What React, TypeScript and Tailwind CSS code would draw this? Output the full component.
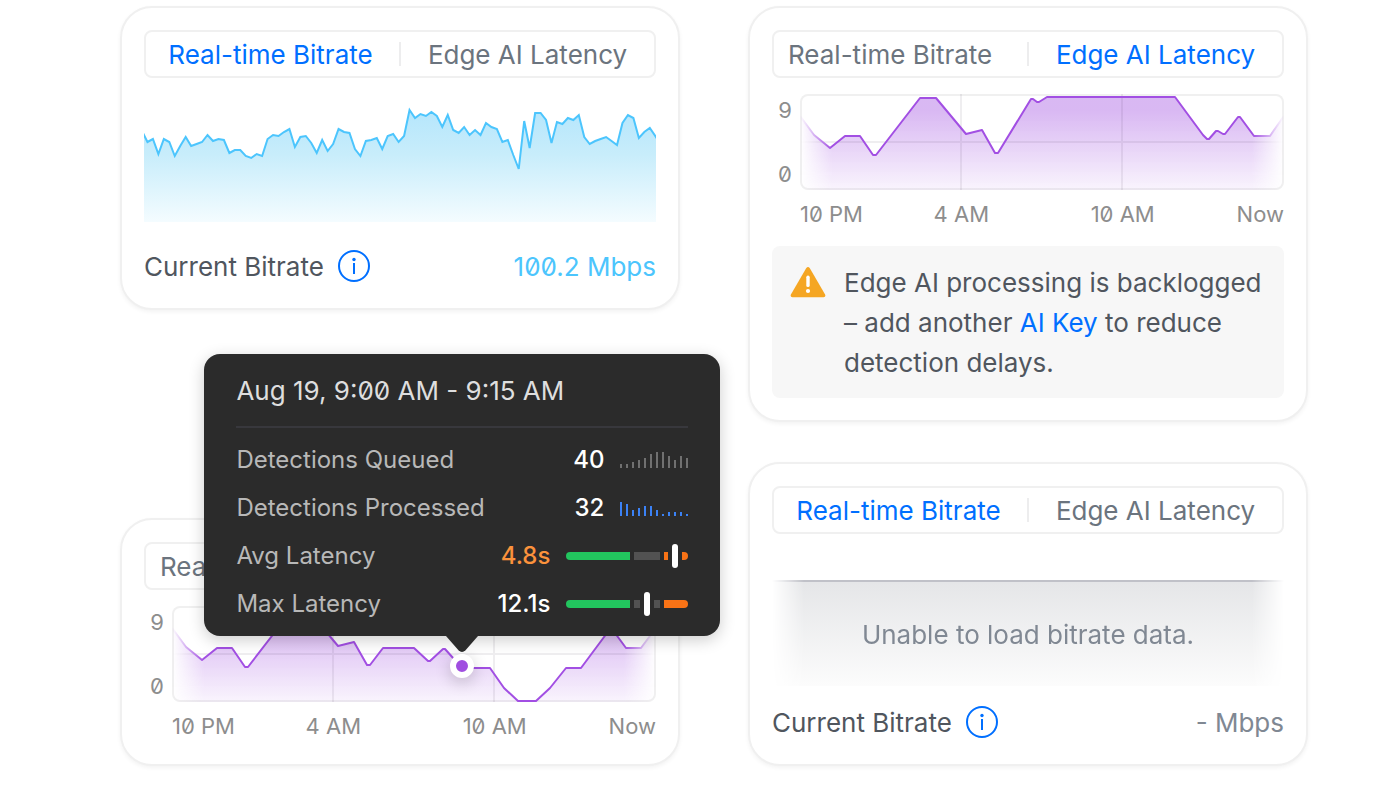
import clsx from 'clsx'
import { ReactNode } from 'react'

type Tab = 'bitrate' | 'latency'
type Point = [number, number]

// one sample every 5.46 units, y measured down from the top of the plot
const BITRATE_STEP = 5.46
const BITRATE_SAMPLES = [
  35, 46, 43, 58, 43, 46, 60, 50, 41, 50, 48, 46, 39, 45, 43, 44, 57, 54, 54, 60, 62, 58, 60, 43,
  39, 40, 36, 33, 51, 41, 40, 47, 57, 44, 55, 48, 33, 36, 37, 53, 60, 45, 44, 42, 53, 40, 38, 46,
  40, 14, 22, 18, 20, 16, 20, 31, 19, 34, 37, 31, 39, 34, 39, 27, 31, 33, 46, 44, 59, 73, 25, 52,
  17, 17, 24, 47, 26, 28, 22, 24, 19, 41, 48, 45, 43, 41, 45, 49, 27, 19, 22, 42, 36, 32, 40, 48,
]

const NIGHT_POINTS: Point[] = [
  [0, 22], [14, 41], [30, 54], [45, 42], [60, 42], [73, 61], [76, 61], [120, 4], [136, 4],
  [166, 40], [182, 36], [195, 59], [198, 59],
]

const BACKLOG_POINTS: Point[] = [
  ...NIGHT_POINTS,
  [231, 5], [233, 5], [237, 8], [239, 8], [247, 3], [375, 3], [403, 41], [407, 45], [409, 45],
  [416, 37], [418, 37], [423, 40], [425, 40], [438, 23], [440, 23], [454, 42], [470, 42], [484, 22],
]

const HISTORY_POINTS: Point[] = [
  ...NIGHT_POINTS,
  [211, 42], [242, 42], [256, 55], [258, 55], [271, 43], [273, 43], [290, 62], [318, 62],
  [332, 82], [346, 95], [364, 95], [378, 82], [394, 62], [409, 62], [438, 23], [440, 23],
  [454, 42], [469, 42], [484, 22],
]

const QUEUED = [4, 4, 6, 8, 10, 14, 16, 16, 12, 8, 12, 10]
const PROCESSED = [14, 12, 6, 8, 10, 10, 6, 2, 4, 4, 4, 2]

const toLine = (points: Point[]) => 'M' + points.map((p) => p.join(' ')).join('L')

function Card({ children }: { children: ReactNode }) {
  return (
    <section className="rounded-[32px] border-2 border-[#f0f0f0] bg-white p-[22px] shadow-[0_2px_4px_rgba(0,0,0,0.05)]">
      {children}
    </section>
  )
}

function Tabs({ active }: { active: Tab }) {
  return (
    <div
      role="tablist"
      className="grid h-12 grid-cols-[1fr_2px_1fr] items-center rounded-lg border-2 border-[#f0f0f0] text-[26px] leading-8 text-[#6b747e]">
      <button
        role="tab"
        aria-selected={active === 'bitrate'}
        className={clsx(
          'pt-0.5 whitespace-nowrap',
          active === 'bitrate' ? 'pr-1 text-[#006fff]' : 'pl-3.5 text-left'
        )}>
        Real-time Bitrate
      </button>
      <span className="h-6 bg-[#ededee]" />
      <button
        role="tab"
        aria-selected={active === 'latency'}
        className={clsx('pt-0.5 whitespace-nowrap', active === 'latency' && 'text-[#006fff]')}>
        Edge AI Latency
      </button>
    </div>
  )
}

function InfoIcon() {
  return (
    <svg viewBox="0 0 32 32" className="size-8 text-[#006fff]" fill="none">
      <circle cx="16" cy="16" r="15" stroke="currentColor" strokeWidth="2" />
      <circle cx="16" cy="9.5" r="1.7" fill="currentColor" />
      <path d="M16 13V24" stroke="currentColor" strokeWidth="2" />
    </svg>
  )
}

function WarningIcon() {
  return (
    <svg viewBox="0 0 36 32" className="mt-1 h-8 w-9 shrink-0">
      <path
        d="M16.3 2.1Q18 -.2 19.7 2.1L35.1 28.4Q36 31 33.6 31.2H2.4Q0 31 .9 28.4Z"
        fill="#f5a623"
      />
      <path d="M18 11.2V19.4" stroke="#fff" strokeWidth="3.4" strokeLinecap="round" />
      <circle cx="18" cy="25" r="2.1" fill="#fff" />
    </svg>
  )
}

function CurrentBitrate({ value, className }: { value: string; className: string }) {
  return (
    <div className="flex h-10 items-center text-[26px] leading-8 text-[#50565e]">
      <span className="pt-0.5">Current Bitrate</span>
      <button aria-label="About current bitrate" className="ml-3.5">
        <InfoIcon />
      </button>
      <span className={clsx('ml-auto pt-0.5 slashed-zero', className)}>{value}</span>
    </div>
  )
}

function BitrateChart() {
  const line = toLine(BITRATE_SAMPLES.map((y, i) => [i * BITRATE_STEP, y]))
  return (
    <svg
      viewBox="2 -2 512 128"
      preserveAspectRatio="none"
      className="mt-4 mb-6 block h-32 w-full overflow-hidden">
      <defs>
        <linearGradient id="bitrate-fill" x1="0" y1="0" x2="0" y2="1">
          <stop offset="0" stopColor="#b5e6fc" />
          <stop offset="0.4" stopColor="#c8edfb" />
          <stop offset="1" stopColor="#f4fcff" />
        </linearGradient>
      </defs>
      <path d={`${line}V126H0Z`} fill="url(#bitrate-fill)" />
      <path
        d={line}
        fill="none"
        stroke="#4cc5fd"
        strokeWidth="2"
        vectorEffect="non-scaling-stroke"
      />
    </svg>
  )
}

type LatencyChartProps = {
  id: string
  points: Point[]
  children?: ReactNode
}

function LatencyChart({ id, points, children }: LatencyChartProps) {
  const line = toLine(points)
  return (
    <div className="mt-4 text-[22px] leading-8 text-[#8d8d8d]">
      <div className="flex h-24">
        <div className="flex w-7 flex-col justify-between pr-2 text-right slashed-zero">
          <span>9</span>
          <span>0</span>
        </div>
        <div className="relative flex-1">
          <div className="h-full overflow-hidden rounded-lg shadow-[inset_0_0_0_2px_#f0f0f0]">
            <svg
              viewBox="0 0 484 96"
              preserveAspectRatio="none"
              className="block size-full [mask-image:linear-gradient(90deg,transparent,#000_32px,#000_calc(100%-32px),transparent)]">
              <defs>
                <linearGradient id={id} x1="0" y1="0" x2="0" y2="1">
                  <stop offset="0.15" stopColor="#a04ee0" stopOpacity="0.4" />
                  <stop offset="1" stopColor="#a04ee0" stopOpacity="0.06" />
                </linearGradient>
              </defs>
              <path d={`${line}V96H0Z`} fill={`url(#${id})`} />
              <path d="M160 0h2v96h-2zM321 0h2v96h-2zM0 47h484v2H0z" fill="#1a1030" fillOpacity="0.07" />
              <path
                d={line}
                fill="none"
                stroke="#a24fe3"
                strokeWidth="2"
                strokeLinejoin="round"
                vectorEffect="non-scaling-stroke"
              />
            </svg>
          </div>
          {children}
        </div>
      </div>
      <div className="mt-2 ml-7 grid grid-cols-6 whitespace-nowrap slashed-zero">
        <span>10 PM</span>
        <span className="col-span-2 text-center">4 AM</span>
        <span className="col-span-2 text-center">10 AM</span>
        <span className="text-right">Now</span>
      </div>
    </div>
  )
}

function Bars({ values, className }: { values: number[]; className: string }) {
  return (
    <span className="ml-4 flex h-4 items-end gap-1">
      {values.map((v, i) => (
        <span key={i} className={clsx('w-0.5', className)} style={{ height: v }} />
      ))}
    </span>
  )
}

function MeterNeedle() {
  return <span className="h-6 w-1.5 rounded-full bg-white" />
}

function TooltipRow({ label, children }: { label: string; children: ReactNode }) {
  return (
    <div className="flex h-12 items-center">
      <dt className="flex-1 text-[#b8b8b8]">{label}</dt>
      <dd className="flex items-center font-medium text-white">{children}</dd>
    </div>
  )
}

function LatencyTooltip() {
  return (
    <div
      role="tooltip"
      className="absolute bottom-[66px] left-[60%] z-10 w-[516px] -translate-x-1/2 rounded-2xl bg-[#2b2b2b] px-8 pb-2 shadow-[0_4px_16px_rgba(0,0,0,0.2)]">
      <div className="border-b-2 border-[#38383d] pt-[21px] pb-[19px] text-[26px] leading-8 text-[#dedede] slashed-zero">
        Aug 19, 9:00 AM - 9:15 AM
      </div>
      <dl className="mt-2 text-2xl">
        <TooltipRow label="Detections Queued">
          40
          <Bars values={QUEUED} className="bg-[#707070]" />
        </TooltipRow>
        <TooltipRow label="Detections Processed">
          32
          <Bars values={PROCESSED} className="bg-[#3b82f6]" />
        </TooltipRow>
        <TooltipRow label="Avg Latency">
          <span className="text-[#fb923c]">4.8s</span>
          <span className="ml-4 flex items-center gap-1">
            <span className="h-2 w-16 rounded-l-full bg-[#22c55e]" />
            <span className="h-2 w-[26px] bg-[#525252]" />
            <span className="h-2 w-1 bg-[#f97316]" />
            <MeterNeedle />
            <span className="h-2 w-1.5 rounded-r-full bg-[#f97316]" />
          </span>
        </TooltipRow>
        <TooltipRow label="Max Latency">
          12.1s
          <span className="ml-4 flex items-center gap-1">
            <span className="h-2 w-16 rounded-l-full bg-[#22c55e]" />
            <span className="h-2 w-1.5 bg-[#525252]" />
            <MeterNeedle />
            <span className="h-2 w-1.5 bg-[#525252]" />
            <span className="h-2 w-6 rounded-r-full bg-[#f97316]" />
          </span>
        </TooltipRow>
      </dl>
      <svg
        viewBox="0 0 32 17"
        className="absolute top-full left-1/2 -mt-px h-[17px] w-8 -translate-x-1/2">
        <path d="M0 0V1L12.5 15.2Q16 18.6 19.5 15.2L32 1V0Z" fill="#2b2b2b" />
      </svg>
    </div>
  )
}

export default function App() {
  return (
    <main className="grid grid-cols-2 gap-[68px] bg-white pt-1.5 pr-[92px] pb-[22px] pl-[120px] font-['Inter',sans-serif]">
      <div className="flex flex-col justify-between">
        <Card>
          <Tabs active="bitrate" />
          <BitrateChart />
          <CurrentBitrate value="100.2 Mbps" className="text-[#4cc5fd]" />
        </Card>
        <Card>
          <Tabs active="latency" />
          <LatencyChart id="history-fill" points={HISTORY_POINTS}>
            <span className="absolute top-12 left-[60%] size-6 -translate-x-1/2 rounded-full border-[6px] border-white bg-[#a04ee0] shadow-[0_4px_16px_rgba(0,0,0,0.2)]" />
            <LatencyTooltip />
          </LatencyChart>
        </Card>
      </div>

      <div className="flex flex-col gap-10">
        <Card>
          <Tabs active="latency" />
          <LatencyChart id="backlog-fill" points={BACKLOG_POINTS} />
          <div className="mt-4 flex gap-[18px] rounded-lg bg-[#f7f7f7] pt-4 pr-4 pb-3.5 pl-[18px]">
            <WarningIcon />
            <p className="pt-px pb-px text-[26px] leading-10 text-[#50565e]">
              Edge AI processing is backlogged – add another{' '}
              <a href="#ai-key" className="text-[#006fff]">
                AI Key
              </a>{' '}
              to reduce detection delays.
            </p>
          </div>
        </Card>
        <Card>
          <Tabs active="bitrate" />
          <div className="mt-[46px] mb-4 flex h-[106px] items-center justify-center border-t-2 border-[#c0c1c8] bg-linear-to-b from-[#e5e6e8] to-[#fcfcfc] pt-0.5 text-[26px] leading-8 text-[#808893] [mask-image:linear-gradient(90deg,transparent,#000_32px,#000_calc(100%-32px),transparent)]">
            Unable to load bitrate data.
          </div>
          <CurrentBitrate value="- Mbps" className="text-[#808893]" />
        </Card>
      </div>
    </main>
  )
}
